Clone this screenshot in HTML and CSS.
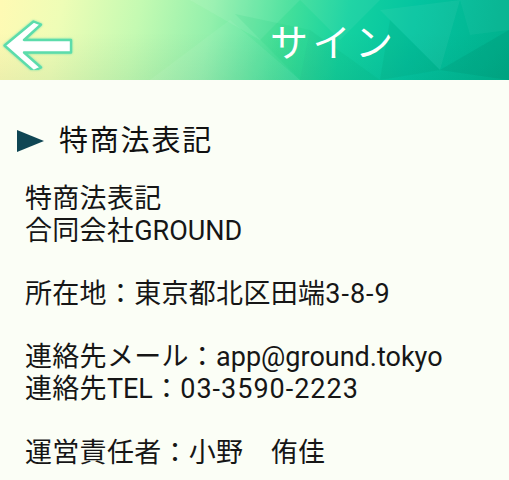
FILE: index.html
```html
<!DOCTYPE html>
<html lang="ja">
<head>
<meta charset="utf-8">
<title>サイン</title>
<link rel="stylesheet" href="styles.css">
</head>
<body>
<header class="appbar">
  <svg class="facets" viewBox="0 0 509 80" preserveAspectRatio="none" aria-hidden="true">
    <polygon points="150,80 230,20 300,80" fill="#ffffff" opacity="0.06"/>
    <polygon points="190,0 300,0 260,40" fill="#ffffff" opacity="0.08"/>
    <polygon points="235,14 300,80 310,30" fill="#00c070" opacity="0.10"/>
    <polygon points="300,0 380,0 340,40" fill="#ffffff" opacity="0.06"/>
    <polygon points="310,30 380,80 300,80" fill="#00a060" opacity="0.10"/>
    <polygon points="380,10 460,0 440,70" fill="#ffffff" opacity="0.05"/>
    <polygon points="390,20 440,70 380,80" fill="#008a60" opacity="0.12"/>
    <polygon points="440,70 509,30 509,80" fill="#007a5a" opacity="0.14"/>
    <polygon points="460,0 509,0 509,30 470,35" fill="#ffffff" opacity="0.04"/>
  </svg>
  <button class="back" aria-label="戻る">
    <svg width="76" height="60" viewBox="0 0 76 60">
      <path d="M4.5 35.5 L33.5 11.5 L41 14.5 L24 30 L71 30 L71 42.5 L24 42.5 L41 57.5 L33.5 61 Z"
            fill="#ffffff" stroke="#5cdcab" stroke-width="2.4" stroke-linejoin="round"/>
    </svg>
  </button>
  <h1 class="title">サイン</h1>
</header>
<main class="content">
  <h2 class="section"><span class="tri"></span>特商法表記</h2>
  <div class="info">
    <p><span class="ja">特商法表記</span><br><span class="ja">合同会社</span>GROUND</p>
    <p><span class="ja">所在地：東京都北区田端</span><span class="num">3-8-9</span></p>
    <p><span class="ja">連絡先メール：</span>app@ground.tokyo<br><span class="ja">連絡先</span>TEL<span class="ja">：</span><span class="num">03-3590-2223</span></p>
    <p><span class="ja">運営責任者：小野　侑佳</span></p>
  </div>
</main>
</body>
</html>
```

FILE: styles.css
```css
html, body {
  margin: 0;
  padding: 0;
  background: #fbfef6;
}

body {
  font-family: Roboto, "Noto Sans CJK JP", sans-serif;
  color: #161616;
  width: 509px;
  height: 480px;
  overflow: hidden;
}

.appbar {
  position: relative;
  height: 80px;
  display: flex;
  align-items: center;
  background:
    linear-gradient(180deg, rgba(0, 0, 0, 0) 40%, rgba(0, 60, 40, 0.06) 100%),
    linear-gradient(100deg,
      #fffab4 0%,
      #eefdb6 12%,
      #c4fab2 27%,
      #93f0ac 41%,
      #45e09a 55%,
      #14d2a0 67%,
      #04c4a0 80%,
      #00b08c 100%);
  overflow: hidden;
}

.facets {
  position: absolute;
  inset: 0;
  width: 100%;
  height: 100%;
}

.back {
  position: relative;
  border: 0;
  padding: 0;
  margin: 0;
  background: none;
  width: 76px;
  height: 60px;
  display: block;
  filter: drop-shadow(0 0 1px rgba(90, 220, 170, 0.8));
}

.back svg {
  display: block;
}

.title {
  position: relative;
  margin: 0 0 0 194px;
  font-family: "Noto Sans CJK JP", sans-serif;
  font-weight: 400;
  font-size: 38px;
  line-height: 44px;
  color: #ffffff;
  letter-spacing: 4.5px;
}

.content {
  padding: 43px 0 0 0;
}

.section {
  display: flex;
  align-items: center;
  margin: 0;
  height: 36px;
  font-weight: 400;
  font-size: 29px;
  line-height: 36px;
  letter-spacing: 1.8px;
  color: #111111;
}

.tri {
  width: 0;
  height: 0;
  margin: 0 15px 0 17px;
  border-left: 27px solid #0f4654;
  border-top: 11px solid transparent;
  border-bottom: 11px solid transparent;
}

.info {
  padding: 25px 0 0 25px;
  font-size: 27px;
  line-height: 31.7px;
}

.info p {
  margin: 0 0 31.7px 0;
}

.ja {
  letter-spacing: 0.3px;
}

.num {
  letter-spacing: 1px;
}
```
